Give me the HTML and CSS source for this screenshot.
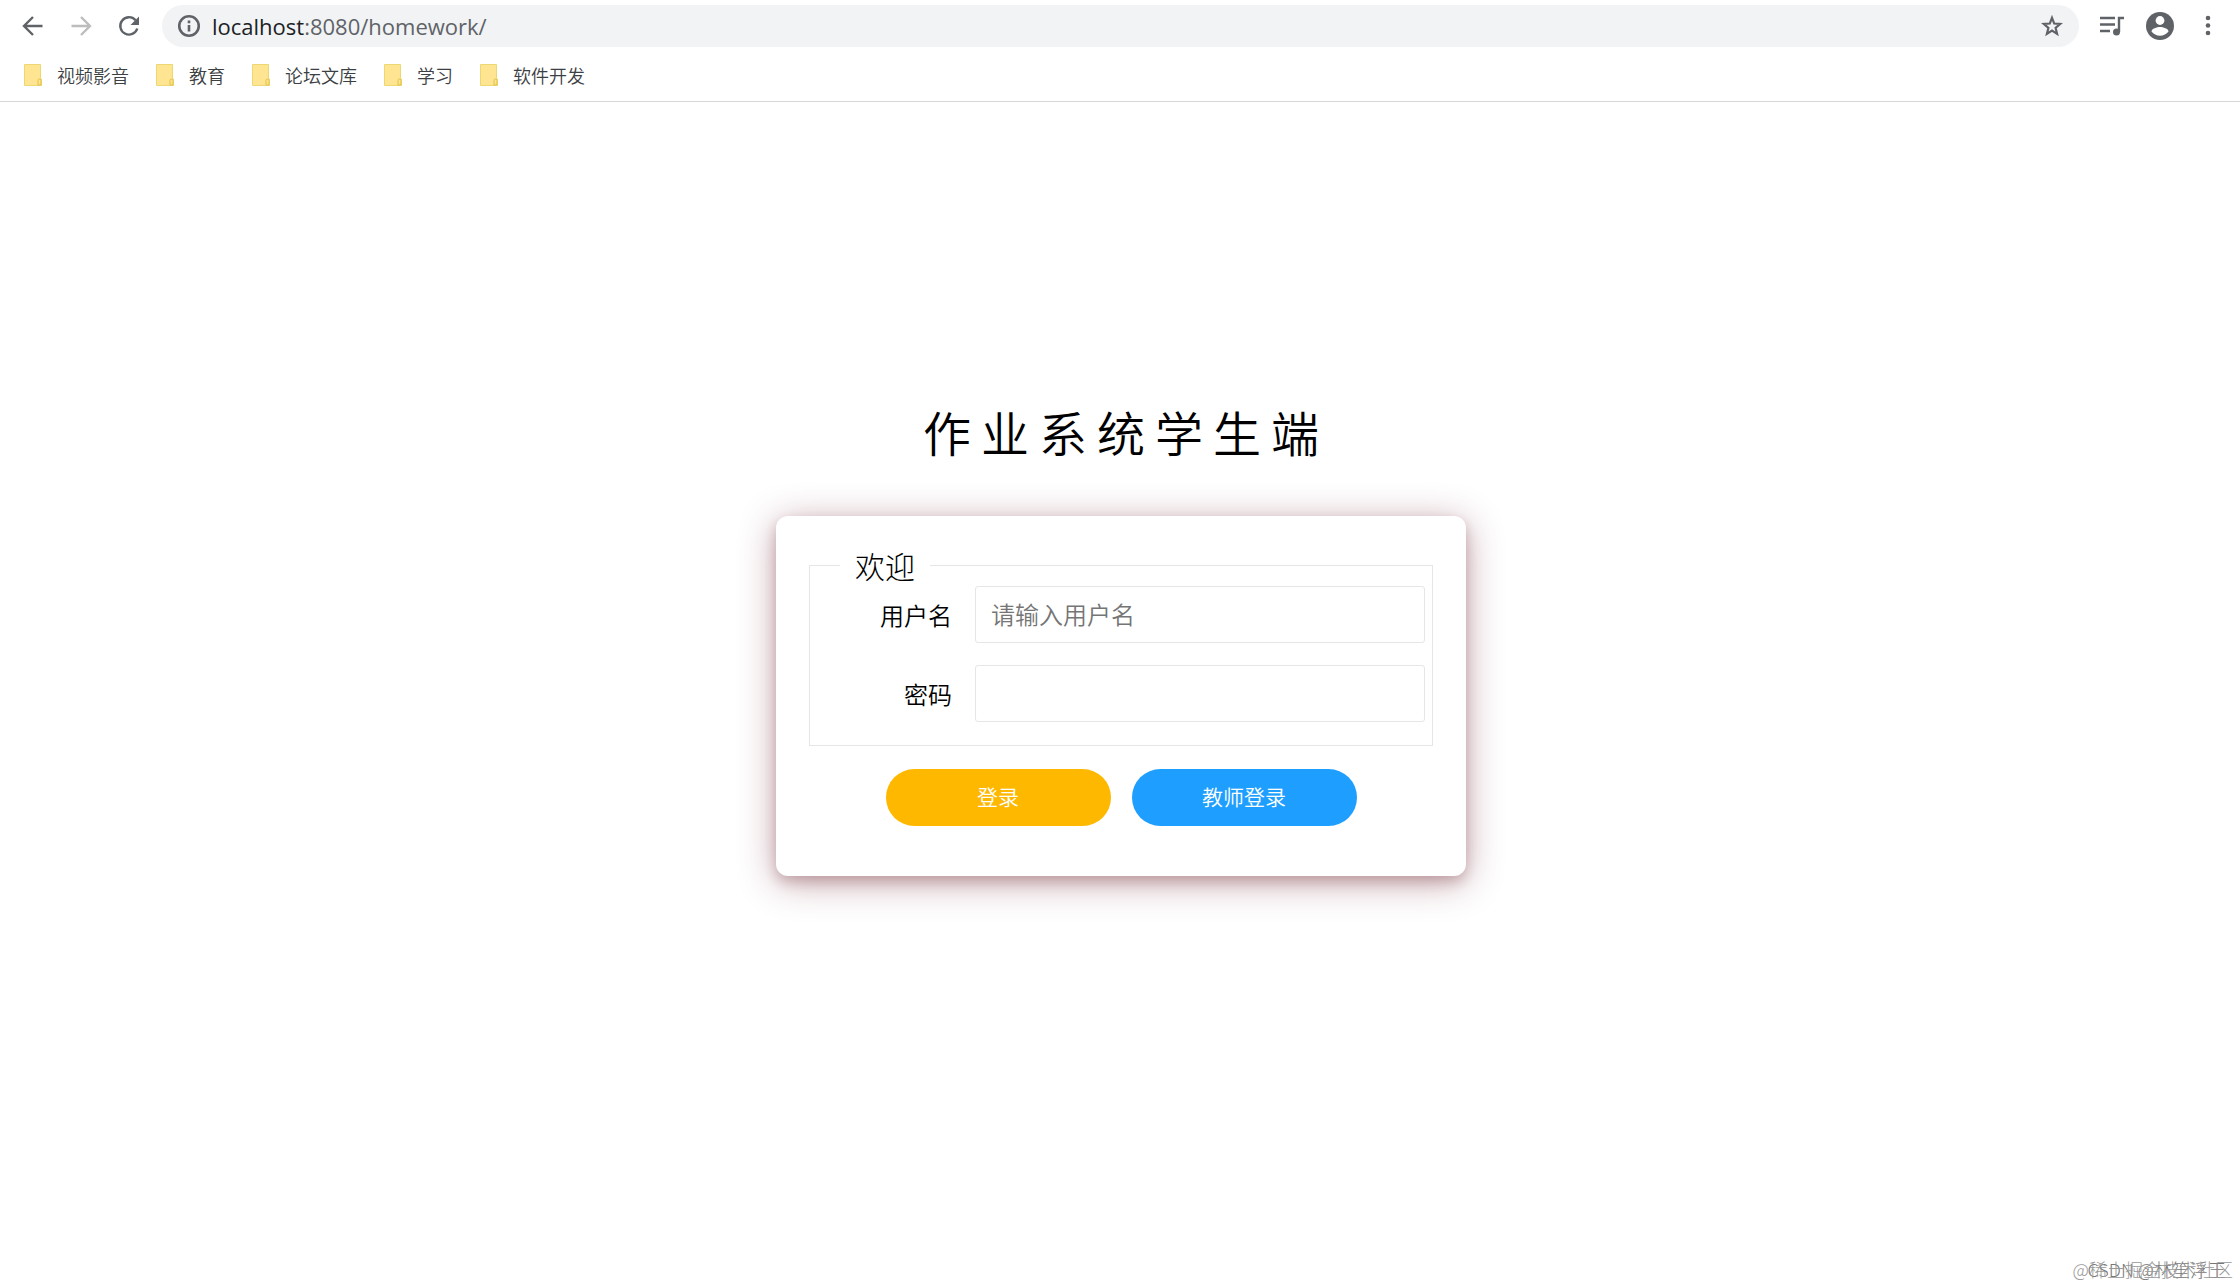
FILE: index.html
```html
<!DOCTYPE html>
<html lang="zh">
<head>
    <meta charset="UTF-8">
    <meta name="viewport" content="width=device-width, initial-scale=1.0">
    <title>作业系统学生端</title>
    <link rel="stylesheet" href="styles.css">
</head>
<body>
    <header class="browser">
        <div class="toolbar">
            <div class="nav-btns">
                <button type="button" class="icon-btn" aria-label="后退">
                    <svg viewBox="0 0 24 24"><path d="M21.5 12H3.5M12 3L3 12l9 9"/></svg>
                </button>
                <button type="button" class="icon-btn disabled" aria-label="前进">
                    <svg viewBox="0 0 24 24"><path d="M2.5 12h18M12 3l9 9-9 9"/></svg>
                </button>
                <button type="button" class="icon-btn" aria-label="刷新">
                    <svg viewBox="0 0 24 24"><path d="M20.3 14.5A8.7 8.7 0 1 1 18.6 6.2"/><path class="fill" d="M22 2.5v8.5h-8.5z"/></svg>
                </button>
            </div>
            <div class="address">
                <svg class="info" viewBox="0 0 24 24"><circle cx="12" cy="12" r="9"/><path d="M12 11v6M12 7v2.4"/></svg>
                <div class="url"><span class="host">localhost</span>:8080/homework/</div>
                <button type="button" class="star" aria-label="收藏">
                    <svg viewBox="0 0 24 24"><path d="M12 4.500l2 5.200 5.600.400-4.300 3.600 1.400 5.500-4.700-3-4.700 3 1.400-5.500-4.300-3.600 5.600-.400z"/></svg>
                </button>
            </div>
            <div class="tool-btns">
                <button type="button" class="icon-btn" aria-label="媒体">
                    <svg viewBox="0 0 24 24"><path d="M0 4h15M0 10.500h15M0 17h10M24 4h-5v14"/><circle class="fill" cx="16.500" cy="18" r="3.500"/></svg>
                </button>
                <button type="button" class="icon-btn avatar" aria-label="用户">
                    <svg viewBox="0 0 28 28"><circle class="fill" cx="14" cy="14" r="14"/><circle class="hole" cx="14" cy="8.500" r="4.400"/><path class="hole" d="M5.500 19.500c0-3 5.500-4.500 8.500-4.500s8.500 1.500 8.500 4.500c-2 2.700-5 4.200-8.500 4.200s-6.500-1.500-8.500-4.200z"/></svg>
                </button>
                <button type="button" class="icon-btn" aria-label="菜单">
                    <svg viewBox="0 0 24 24"><circle class="fill" cx="12" cy="4" r="2.300"/><circle class="fill" cx="12" cy="11.500" r="2.300"/><circle class="fill" cx="12" cy="19" r="2.300"/></svg>
                </button>
            </div>
        </div>
        <nav class="bookmarks">
            <a href="#"><svg viewBox="0 0 18 22"><use href="#folder"/></svg>视频影音</a>
            <a href="#"><svg viewBox="0 0 18 22"><use href="#folder"/></svg>教育</a>
            <a href="#"><svg viewBox="0 0 18 22"><use href="#folder"/></svg>论坛文库</a>
            <a href="#"><svg viewBox="0 0 18 22"><use href="#folder"/></svg>学习</a>
            <a href="#"><svg viewBox="0 0 18 22"><use href="#folder"/></svg>软件开发</a>
        </nav>
    </header>

    <svg class="defs" aria-hidden="true">
        <symbol id="folder" viewBox="0 0 18 22">
            <path d="M.5 .5h16v14.500h1V21.500H.5z" fill="#ffe491" stroke="#ecd873"/>
            <path d="M14 21v-4.500q0-1.500 1.500-1.500t1.500 1.500V21z" fill="#fbe48c" stroke="#e3c14c"/>
        </symbol>
    </svg>

    <main class="page">
        <h1>作业系统学生端</h1>
        <form class="login-box">
            <fieldset>
                <legend>欢迎</legend>
                <div class="form-item">
                    <label for="username">用户名</label>
                    <input type="text" id="username" placeholder="请输入用户名">
                </div>
                <div class="form-item">
                    <label for="password">密码</label>
                    <input type="password" id="password">
                </div>
            </fieldset>
            <div class="actions">
                <button type="button" class="btn btn-warm">登录</button>
                <button type="button" class="btn btn-normal">教师登录</button>
            </div>
        </form>
    </main>

    <div class="watermark csdn">CSDN @林笙浮王</div>
    <div class="watermark juejin">@稀土掘金技术社区</div>
</body>
</html>
```
FILE: styles.css
```css
* {
    margin: 0;
    padding: 0;
    box-sizing: border-box;
}

body {
    position: relative;
    min-height: 100vh;
    background: #fff;
    color: #000;
    font-family: "Noto Sans CJK SC", sans-serif;
    font-size: 24px;
}

button {
    border: none;
    background: none;
    cursor: pointer;
    font-family: inherit;
}

svg {
    display: block;
    fill: none;
    stroke: #5f6368;
    stroke-width: 2.4;
}

.fill {
    fill: #5f6368;
    stroke: none;
}

.hole {
    fill: #fff;
    stroke: none;
}

.defs {
    position: absolute;
    width: 0;
    height: 0;
}

.browser {
    border-bottom: 1px solid #d5d7d9;
}

.toolbar {
    display: flex;
    align-items: center;
    gap: 21px;
    height: 52px;
    padding: 0 20px 0 21px;
}

.nav-btns {
    display: flex;
    align-items: center;
    gap: 24px;
}

.tool-btns {
    display: flex;
    align-items: center;
    gap: 22px;
}

.icon-btn svg {
    width: 24px;
    height: 24px;
}

.avatar svg {
    width: 28px;
    height: 28px;
}

.disabled svg {
    stroke: #bbbdbf;
}

.address {
    flex: 1;
    display: flex;
    align-items: center;
    gap: 10px;
    height: 42px;
    padding: 0 14px;
    border-radius: 21px;
    background: #f1f3f4;
}

.address svg {
    width: 26px;
    height: 26px;
}

.star svg {
    stroke-width: 2;
}

.url {
    flex: 1;
    font-family: "Open Sans", sans-serif;
    font-size: 22px;
    line-height: 28px;
    color: #5f6368;
}

.host {
    color: #202124;
}

.bookmarks {
    display: flex;
    gap: 27px;
    height: 49px;
    padding: 0 24px 4px;
}

.bookmarks a {
    display: flex;
    align-items: center;
    gap: 15px;
    color: #3c4043;
    font-size: 18px;
    font-weight: 350;
    text-decoration: none;
}

.bookmarks svg {
    width: 18px;
    height: 22px;
    stroke-width: 1;
}

.page {
    display: flex;
    flex-direction: column;
    align-items: center;
    padding: 293px 20px 0 22px;
}

h1 {
    margin-bottom: 49px;
    padding-left: 10px;
    font-size: 48px;
    font-weight: 350;
    line-height: 72px;
    letter-spacing: 10px;
}

.login-box {
    width: 100%;
    max-width: 690px;
    padding: 32px 33px 50px;
    border-radius: 12px;
    background: #fff;
    box-shadow: 0 6px 12px rgba(100, 30, 40, 0.2), 0 6px 36px rgba(110, 30, 45, 0.42);
}

fieldset {
    padding: 4px 7px 23px;
    border: 1px solid #e6e6e6;
}

legend {
    margin-left: 23px;
    padding: 0 15px;
    font-size: 30px;
    font-weight: 300;
    line-height: 34px;
}

.form-item {
    display: flex;
    align-items: center;
    gap: 23px;
}

.form-item + .form-item {
    margin-top: 22px;
}

.form-item label {
    flex: 1;
    font-weight: 350;
    text-align: right;
}

.form-item input {
    width: 450px;
    height: 57px;
    padding: 0 15px 2px;
    border: 1px solid #e6e6e6;
    border-radius: 3px;
    background: #fff;
    font-family: inherit;
    font-size: 24px;
    font-weight: 350;
}

.form-item input::placeholder {
    color: #757575;
}

.actions {
    display: flex;
    justify-content: center;
    gap: 21px;
    margin-top: 23px;
}

.btn {
    width: 225px;
    height: 57px;
    padding-bottom: 3px;
    border-radius: 30px;
    color: #fff;
    font-size: 21px;
    font-weight: 350;
}

.btn-warm {
    background: #ffb800;
}

.btn-normal {
    background: #1e9fff;
}

.watermark {
    position: absolute;
    right: 7px;
    bottom: 6px;
    font-size: 18px;
    font-weight: 300;
    line-height: 24px;
    color: #999;
}

.csdn {
    right: 14px;
    color: #777;
}
```
